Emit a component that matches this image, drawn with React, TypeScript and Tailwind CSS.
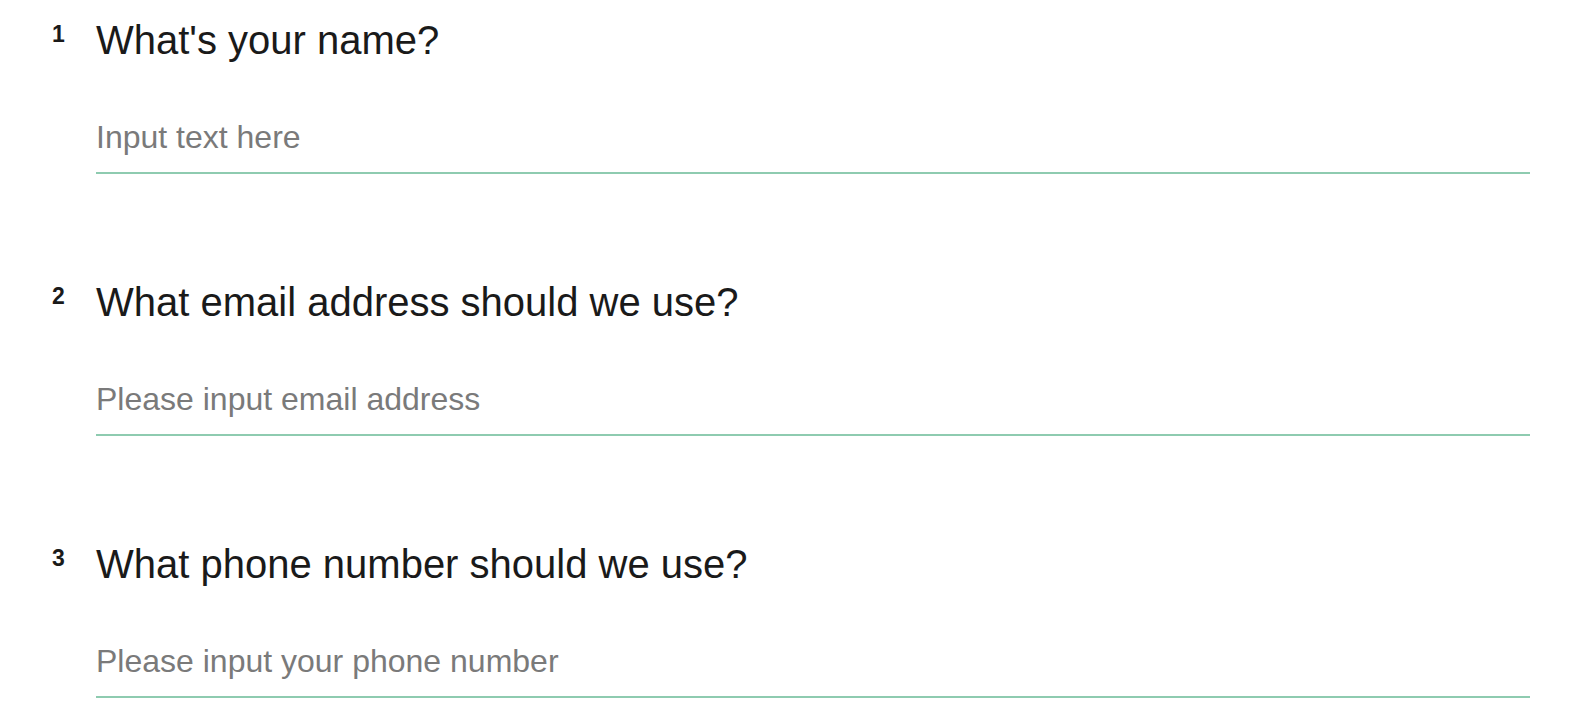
import React from "react";

const questions = [
  { n: "1", q: "What's your name?", p: "Input text here", type: "text" },
  { n: "2", q: "What email address should we use?", p: "Please input email address", type: "email" },
  { n: "3", q: "What phone number should we use?", p: "Please input your phone number", type: "tel" },
];

export default function App() {
  return (
    <div
      className="w-[1578px] h-[710px] bg-white overflow-hidden pl-[52px] pr-[48px] pt-[16px]"
      style={{ fontFamily: '"Liberation Sans", Arial, Helvetica, sans-serif' }}
    >
      <div className="flex flex-col gap-[104px]">
        {questions.map((item) => (
          <div key={item.n} className="flex">
            <div className="w-[44px] shrink-0 pt-[5px] text-[23px] leading-[26px] font-bold text-[#1a1a1a]">
              {item.n}
            </div>
            <div className="flex-1 flex flex-col">
              <div className="text-[40px] leading-[48px] text-[#1a1a1a]">{item.q}</div>
              <input
                type={item.type}
                placeholder={item.p}
                className="mt-[52px] w-full h-[58px] pb-[16px] pt-[2px] text-[32px] leading-[40px] text-[#333] placeholder:text-[#7a7a7a] bg-transparent outline-none border-0 border-b-2 border-[#8ecbb0]"
                style={{ fontFamily: '"Liberation Sans", Arial, Helvetica, sans-serif' }}
              />
            </div>
          </div>
        ))}
      </div>
    </div>
  );
}
